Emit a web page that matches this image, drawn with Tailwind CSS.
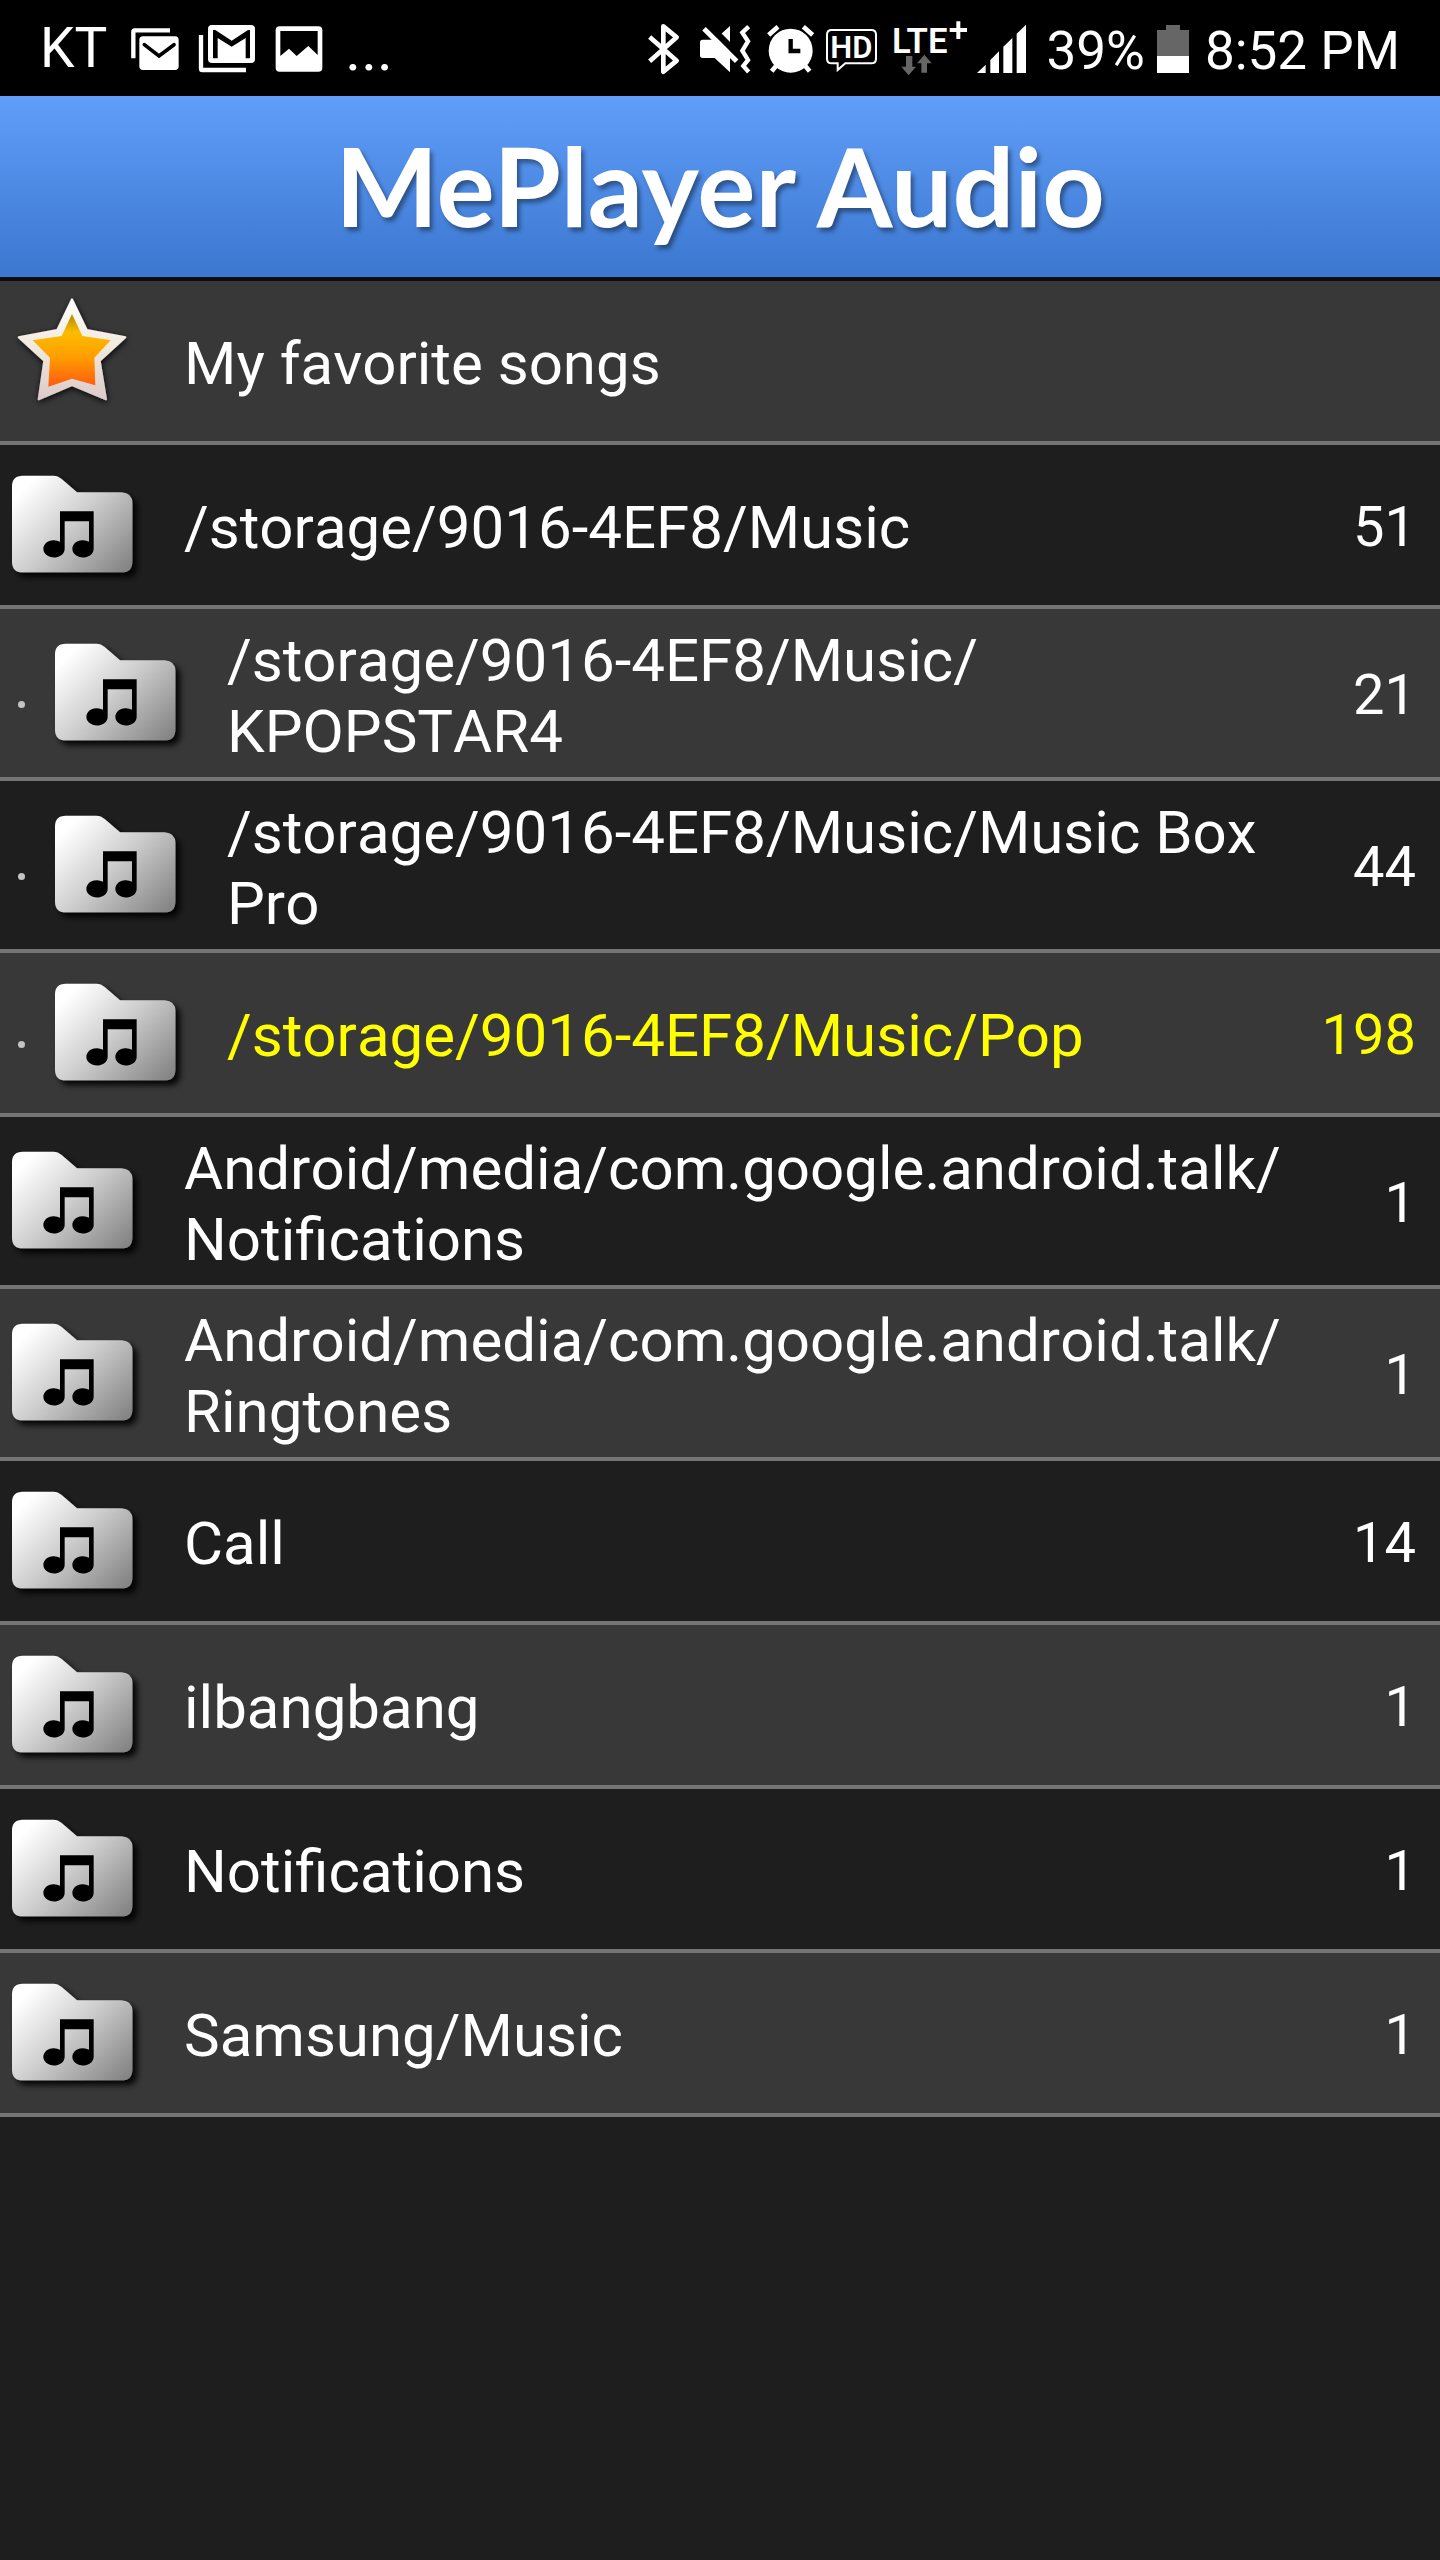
<!DOCTYPE html>
<html lang="en">
<head>
<meta charset="utf-8">
<meta name="viewport" content="width=device-width, initial-scale=1">
<title>MePlayer Audio</title>
<script src="https://cdn.jsdelivr.net/npm/@tailwindcss/browser@4"></script>
</head>
<body class="min-h-screen bg-[#1e1e1e] font-[Roboto,sans-serif] text-white">

<!-- Shared gradients and icons -->
<svg class="absolute size-0" aria-hidden="true">
  <defs>
    <linearGradient id="folderFill" x1="0" y1="0.1" x2="1" y2="0.9">
      <stop offset="0.08" stop-color="#fff"/><stop offset="0.5" stop-color="#cdcdcd"/><stop offset="1" stop-color="#858585"/>
    </linearGradient>
    <linearGradient id="starFill" x1="0" y1="0" x2="0" y2="1">
      <stop offset="0" stop-color="#b08a00"/><stop offset="0.25" stop-color="#fcbc00"/><stop offset="0.6" stop-color="#ff9d00"/><stop offset="1" stop-color="#ff5a10"/>
    </linearGradient>
    <linearGradient id="starEdge" x1="0" y1="0" x2="0" y2="1">
      <stop offset="0" stop-color="#fff"/><stop offset="0.5" stop-color="#f0e8da"/><stop offset="1" stop-color="#dccaca"/>
    </linearGradient>
    <filter id="shadow" x="-20%" y="-20%" width="150%" height="150%">
      <feDropShadow dx="14" dy="14" stdDeviation="10" flood-color="#000" flood-opacity="0.95"/>
    </filter>
    <filter id="starShadow" x="-20%" y="-20%" width="150%" height="150%">
      <feDropShadow dx="2" dy="6" stdDeviation="9" flood-color="#000" flood-opacity="0.9"/>
    </filter>
    <symbol id="folder" viewBox="0 585 450 360">
      <path filter="url(#shadow)" fill="url(#folderFill)" d="M36 649Q36 617 68 617H160Q174 617 185 627L231 667H365Q397 669 397 699V875Q397 907 365 907H68Q36 907 36 875Z"/>
      <path d="M180 724H281V836A32 26 0 1 1 267 815V754H194V836A32 26 0 1 1 180 815Z"/>
    </symbol>
  </defs>
</svg>

<!-- Status bar -->
<div class="flex h-24 items-center justify-between bg-black pr-10 pl-10">
  <div class="flex items-center">
    <span class="text-[55px] leading-none">KT</span>
    <svg class="ml-6 h-24 w-[50px]" viewBox="396 0 150 288" aria-hidden="true">
      <path d="M403 175V95Q403 91 407 91H513" fill="none" stroke="#fff" stroke-width="13"/>
      <rect x="421" y="109" width="118" height="101" rx="11" fill="#fff"/>
      <path d="M436 134L480 168L525 134" fill="none" stroke="#000" stroke-width="11" stroke-linecap="round"/>
    </svg>
    <svg class="ml-4 h-24 w-[60px]" viewBox="594 0 180 288" aria-hidden="true">
      <path d="M606 105V206Q606 210 610 210H741" fill="none" stroke="#fff" stroke-width="13"/>
      <rect x="627" y="75" width="141" height="114" rx="12" fill="#fff"/>
      <path d="M642 90H649L698 122L747 90H753V175H740V114L698 140L656 114V175H642Z"/>
    </svg>
    <svg class="ml-4 h-24 w-[52px]" viewBox="822 0 156 288" aria-hidden="true">
      <rect x="830" y="79" width="140" height="136" rx="12" fill="#fff"/>
      <path d="M844 93H956V165L928 138L893 168L870 146L844 168Z"/>
    </svg>
    <span class="ml-5 pt-1 text-[60px] leading-none">...</span>
  </div>
  <div class="flex items-center">
    <svg class="h-24 w-[33px]" viewBox="78 0 99 288" aria-hidden="true">
      <path d="M86 111L167 182L127 215V79L167 112L86 184" fill="none" stroke="#fff" stroke-width="14" stroke-linejoin="round"/>
    </svg>
    <svg class="ml-5 h-24 w-[51px]" viewBox="240 0 153 288" aria-hidden="true">
      <path d="M248 119H284L330 78V217L284 174H248Q240 174 240 166V127Q240 119 248 119Z" fill="#fff"/>
      <path d="M264 74L362 172" stroke="#000" stroke-width="20"/>
      <path d="M252 86L350 184" stroke="#fff" stroke-width="15"/>
      <path d="M386 80L367 98L384 124L367 152L384 180L370 198L386 216" fill="none" stroke="#fff" stroke-width="13"/>
    </svg>
    <svg class="ml-4 h-24 w-[47px]" viewBox="441 0 141 288" aria-hidden="true">
      <circle cx="512" cy="152" r="66" fill="#fff"/>
      <path d="M446 105L474 80M550 80L578 105M455 214L470 196M569 214L554 196" stroke="#fff" stroke-width="14"/>
      <path d="M512 117V153H541" fill="none" stroke="#000" stroke-width="13"/>
    </svg>
    <svg class="ml-3 h-24 w-[51px]" viewBox="615 0 153 288" aria-hidden="true">
      <path d="M632 90H751Q765 90 765 104V176Q765 190 751 190H673L650 210V190H632Q618 190 618 176V104Q618 90 632 90Z" fill="none" stroke="#fff" stroke-width="6"/>
      <text x="691" y="174" text-anchor="middle" font-size="93" font-weight="600" fill="#fff">HD</text>
    </svg>
    <svg class="ml-3 h-24 w-20" viewBox="810 0 240 288" aria-hidden="true">
      <text x="902" y="158" text-anchor="middle" font-size="104" font-weight="600" fill="#fff">LTE</text>
      <path d="M992 90H1044M1018 64V117" stroke="#fff" stroke-width="12"/>
      <path d="M861 168H880V200H891L869 226L847 200H861ZM907 218V190H894L916 164L938 190H924V218Z" fill="#666"/>
    </svg>
    <svg class="ml-2 h-24 w-[50px]" viewBox="1071 0 150 288" aria-hidden="true">
      <path d="M1071 219L1097 194V219ZM1111 219V180L1137 154V219ZM1150 219V140L1177 114V219ZM1190 219V101L1218 74V219Z" fill="#fff"/>
    </svg>
    <span class="ml-5 pt-1.5 text-[53px] leading-none">39%</span>
    <svg class="ml-3 h-24 w-8" viewBox="468 0 96 288" aria-hidden="true">
      <path d="M495 75H537V90H564V168H468V90H495Z" fill="#666"/>
      <path d="M468 168H564V219H468Z" fill="#fff"/>
    </svg>
    <span class="ml-4 pt-1.5 text-[53px] leading-none">8:52 PM</span>
  </div>
</div>

<!-- Title bar -->
<header class="flex h-[185px] items-center justify-center border-b-4 border-[#0a0d12] bg-linear-to-b from-[#609efa] to-[#3b77cf] pb-1">
  <h1 class="font-[Lato,sans-serif] text-[109px] leading-none font-bold text-shadow-[3px_4px_4px_rgb(0_0_0/0.4)]">MePlayer Audio</h1>
</header>

<!-- Folder list -->
<main>
  <ul class="text-[60px] leading-[71px] [font-kerning:none]">
    <li class="border-b-4 border-[#757575] bg-[#383838]">
      <a href="#favorites" class="flex min-h-40 items-center pr-6">
        <svg class="h-[120px] w-[150px] shrink-0 overflow-visible" viewBox="0 93 450 360" aria-hidden="true">
          <path filter="url(#starShadow)" fill="url(#starEdge)" stroke="url(#starEdge)" stroke-width="6" stroke-linejoin="round" d="M216 88L260 180L376 202L299 272L318 388L216 345L116 388L133 272L56 202L172 180Z"/>
          <path fill="url(#starFill)" d="M216 132L247 198L332 211L283 263L286 346L216 326L145 350L150 263L98 211L185 198Z"/>
        </svg>
        <span class="ml-[34px] flex-1 pt-[5px]">My favorite songs</span>
      </a>
    </li>
    <li class="border-b-4 border-[#757575] bg-[#1e1e1e]">
      <a href="#music" class="flex min-h-40 items-center pr-6">
        <svg class="h-[120px] w-[150px] shrink-0" aria-hidden="true"><use href="#folder"/></svg>
        <span class="ml-[34px] flex-1 pt-[5px]">/storage/9016-4EF8/Music</span>
        <span class="min-w-[124px] pt-[5px] text-right text-[56px]">51</span>
      </a>
    </li>
    <li class="border-b-4 border-[#757575] bg-[#383838]">
      <a href="#kpopstar4" class="flex min-h-[168px] items-center pr-6">
        <span class="w-[43px] shrink-0 pt-[22px] pl-[18px]"><span class="block size-[7px] rounded-full bg-[#c4c4c4]"></span></span>
        <svg class="h-[120px] w-[150px] shrink-0" aria-hidden="true"><use href="#folder"/></svg>
        <span class="ml-[34px] flex-1 pt-[5px]">/storage/9016-4EF8/Music/<wbr>KPOPSTAR4</span>
        <span class="min-w-[124px] pt-[5px] text-right text-[56px]">21</span>
      </a>
    </li>
    <li class="border-b-4 border-[#757575] bg-[#1e1e1e]">
      <a href="#music-box-pro" class="flex min-h-[168px] items-center pr-6">
        <span class="w-[43px] shrink-0 pt-[22px] pl-[18px]"><span class="block size-[7px] rounded-full bg-[#c4c4c4]"></span></span>
        <svg class="h-[120px] w-[150px] shrink-0" aria-hidden="true"><use href="#folder"/></svg>
        <span class="ml-[34px] flex-1 pt-[5px]">/storage/9016-4EF8/Music/Music Box Pro</span>
        <span class="min-w-[124px] pt-[5px] text-right text-[56px]">44</span>
      </a>
    </li>
    <li class="border-b-4 border-[#757575] bg-[#383838]">
      <a href="#pop" aria-current="true" class="flex min-h-40 items-center pr-6 text-[#ffff00]">
        <span class="w-[43px] shrink-0 pt-[22px] pl-[18px]"><span class="block size-[7px] rounded-full bg-[#c4c4c4]"></span></span>
        <svg class="h-[120px] w-[150px] shrink-0" aria-hidden="true"><use href="#folder"/></svg>
        <span class="ml-[34px] flex-1 pt-[5px]">/storage/9016-4EF8/Music/Pop</span>
        <span class="min-w-[124px] pt-[5px] text-right text-[56px]">198</span>
      </a>
    </li>
    <li class="border-b-4 border-[#757575] bg-[#1e1e1e]">
      <a href="#talk-notifications" class="flex min-h-[168px] items-center pr-6">
        <svg class="h-[120px] w-[150px] shrink-0" aria-hidden="true"><use href="#folder"/></svg>
        <span class="ml-[34px] flex-1 pt-[5px]">Android/media/com.google.android.talk/<wbr>Notifications</span>
        <span class="min-w-[124px] pt-[5px] text-right text-[56px]">1</span>
      </a>
    </li>
    <li class="border-b-4 border-[#757575] bg-[#383838]">
      <a href="#talk-ringtones" class="flex min-h-[168px] items-center pr-6">
        <svg class="h-[120px] w-[150px] shrink-0" aria-hidden="true"><use href="#folder"/></svg>
        <span class="ml-[34px] flex-1 pt-[5px]">Android/media/com.google.android.talk/<wbr>Ringtones</span>
        <span class="min-w-[124px] pt-[5px] text-right text-[56px]">1</span>
      </a>
    </li>
    <li class="border-b-4 border-[#757575] bg-[#1e1e1e]">
      <a href="#call" class="flex min-h-40 items-center pr-6">
        <svg class="h-[120px] w-[150px] shrink-0" aria-hidden="true"><use href="#folder"/></svg>
        <span class="ml-[34px] flex-1 pt-[5px]">Call</span>
        <span class="min-w-[124px] pt-[5px] text-right text-[56px]">14</span>
      </a>
    </li>
    <li class="border-b-4 border-[#757575] bg-[#383838]">
      <a href="#ilbangbang" class="flex min-h-40 items-center pr-6">
        <svg class="h-[120px] w-[150px] shrink-0" aria-hidden="true"><use href="#folder"/></svg>
        <span class="ml-[34px] flex-1 pt-[5px]">ilbangbang</span>
        <span class="min-w-[124px] pt-[5px] text-right text-[56px]">1</span>
      </a>
    </li>
    <li class="border-b-4 border-[#757575] bg-[#1e1e1e]">
      <a href="#notifications" class="flex min-h-40 items-center pr-6">
        <svg class="h-[120px] w-[150px] shrink-0" aria-hidden="true"><use href="#folder"/></svg>
        <span class="ml-[34px] flex-1 pt-[5px]">Notifications</span>
        <span class="min-w-[124px] pt-[5px] text-right text-[56px]">1</span>
      </a>
    </li>
    <li class="border-b-4 border-[#757575] bg-[#383838]">
      <a href="#samsung-music" class="flex min-h-40 items-center pr-6">
        <svg class="h-[120px] w-[150px] shrink-0" aria-hidden="true"><use href="#folder"/></svg>
        <span class="ml-[34px] flex-1 pt-[5px]">Samsung/Music</span>
        <span class="min-w-[124px] pt-[5px] text-right text-[56px]">1</span>
      </a>
    </li>
  </ul>
</main>
</body>
</html>
